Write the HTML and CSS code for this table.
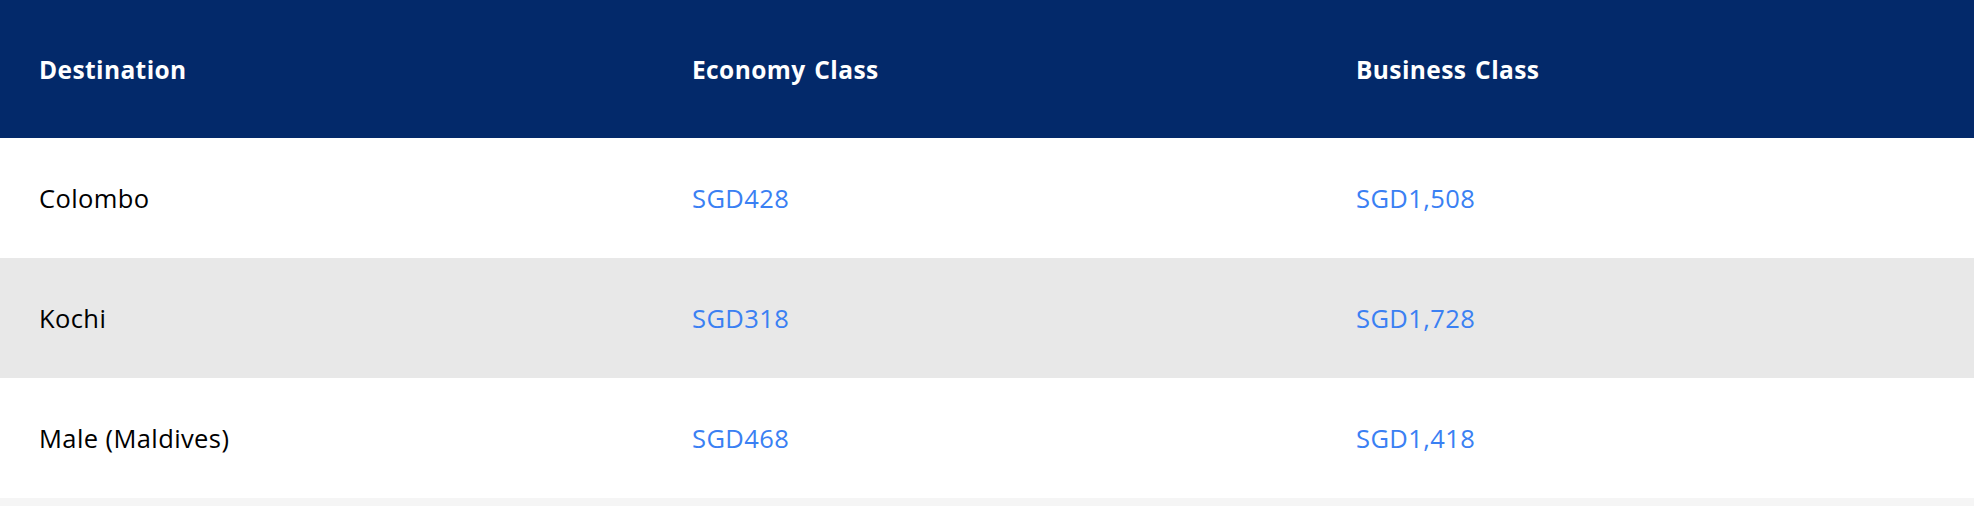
FILE: index.html
```html
<!DOCTYPE html>
<html>
<head>
<meta charset="utf-8">
<link rel="stylesheet" href="styles.css">
</head>
<body>
<div class="fares">
  <div class="row head">
    <div class="cell">Destination</div>
    <div class="cell">Economy Class</div>
    <div class="cell">Business Class</div>
  </div>
  <div class="row">
    <div class="cell">Colombo</div>
    <div class="cell price">SGD428</div>
    <div class="cell price">SGD1,508</div>
  </div>
  <div class="row alt">
    <div class="cell">Kochi</div>
    <div class="cell price">SGD318</div>
    <div class="cell price">SGD1,728</div>
  </div>
  <div class="row">
    <div class="cell">Male (Maldives)</div>
    <div class="cell price">SGD468</div>
    <div class="cell price">SGD1,418</div>
  </div>
</div>
</body>
</html>
```

FILE: styles.css
```css
html, body {
  margin: 0;
  padding: 0;
}
body {
  background: #f5f5f5;
  font-family: "Open Sans", "Liberation Sans", sans-serif;
  width: 1974px;
  height: 506px;
  overflow: hidden;
}
.fares {
  display: flex;
  flex-direction: column;
}
.row {
  display: grid;
  grid-template-columns: 653px 664px 1fr;
  height: 120px;
  align-items: center;
  background: #ffffff;
  color: #000000;
  font-size: 25.5px;
  letter-spacing: 0.4px;
}
.row.head {
  height: 138px;
  background: #03296a;
  color: #ffffff;
  font-weight: 700;
  font-size: 24.5px;
  letter-spacing: 0.4px;
  word-spacing: 2px;
}
.row.alt {
  background: #e8e8e8;
}
.cell {
  padding-left: 39px;
}
.price {
  color: #3a80f3;
}
```
